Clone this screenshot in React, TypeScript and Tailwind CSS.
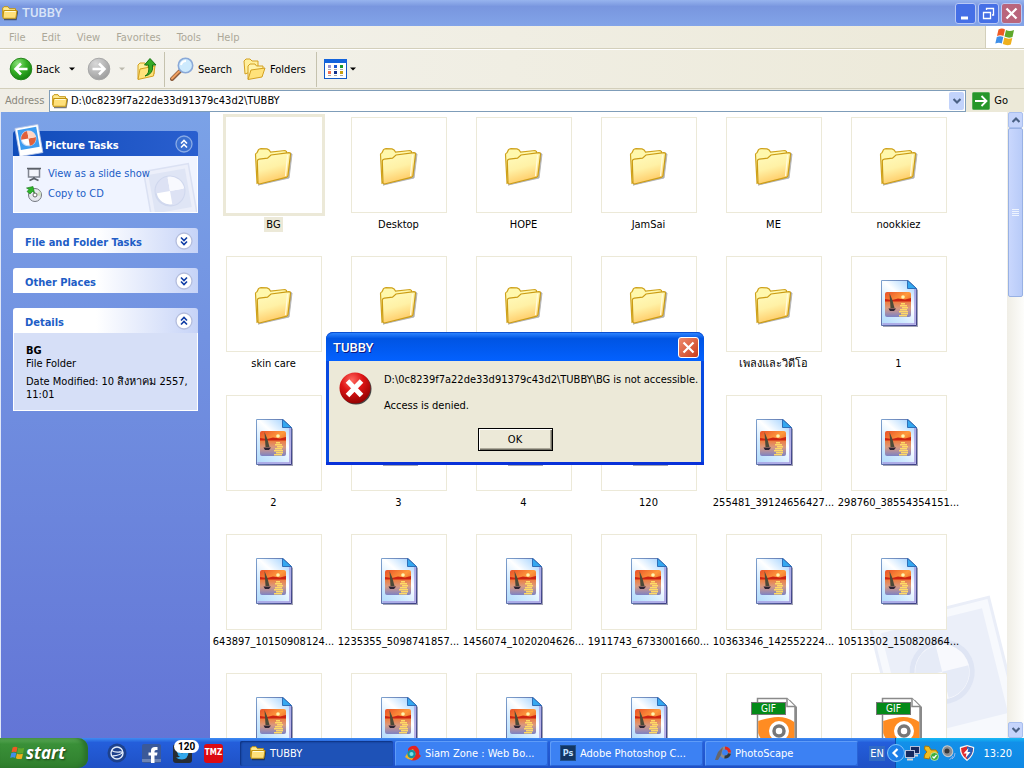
import React from 'react';

const folders = ['BG', 'Desktop', 'HOPE', 'JamSai', 'ME', 'nookkiez', 'skin care', '', '', '', 'เพลงและวิดีโอ'];
const pictures = [
  '1', '2', '3', '4', '120',
  '255481_39124656427...', '298760_38554354151...', '643897_10150908124...', '1235355_5098741857...',
  '1456074_1020204626...', '1911743_6733001660...', '10363346_142552224...', '10513502_150820864...',
  '', '', '', '',
];
const gifs = ['', ''];

const items = [
  ...folders.map((name) => ({ name, kind: 'folder' })),
  ...pictures.map((name) => ({ name, kind: 'picture' })),
  ...gifs.map((name) => ({ name, kind: 'gif' })),
];

function FolderIcon() {
  return (
    <svg className="w-12 h-12" viewBox="0 0 48 48" aria-hidden="true">
      <defs>
        <linearGradient id="folderFront" x1="0" y1="0" x2="0.3" y2="1">
          <stop offset="0" stopColor="#fffcc0" />
          <stop offset="0.55" stopColor="#fff1a6" />
          <stop offset="1" stopColor="#ffcb66" />
        </linearGradient>
      </defs>
      <path d="M8 44 L39 37 L42 13 L40 12 L38 36 Z" fill="#666" stroke="#888" strokeWidth="1" opacity="0.6" />
      <path d="M7 42 L5.500 13.500 Q5.500 12.300 7 11.800 L8.500 8.700 Q9.500 7.700 11 7.600 L17 7.800 Q19.500 8.500 20.500 11 L35 9.500 L36.500 10.500 V14 Z" fill="#fff8ac" stroke="#cfa21c" strokeWidth="1.200" />
      <path d="M8 42.500 L7.300 20 Q7.500 18.300 9.300 18.100 L17.500 17.200 L21 14 L39 11.600 Q40.500 11.600 40.500 13 L38 34.500 Q37.700 36 36.200 36.400 L9.500 43 Z" fill="url(#folderFront)" stroke="#cb9c14" strokeWidth="1.200" />
      <path d="M37.500 14 L35.500 35" stroke="#fffbe0" strokeWidth="1.200" />
    </svg>
  );
}

function PictureIcon() {
  return (
    <svg className="w-12 h-12" viewBox="0 0 48 48" aria-hidden="true">
      <defs>
        <linearGradient id="sheet" x1="0.9" y1="0" x2="0.2" y2="1">
          <stop offset="0" stopColor="#9ccfff" />
          <stop offset="0.4" stopColor="#ffffff" />
          <stop offset="0.7" stopColor="#d4ecff" />
          <stop offset="1" stopColor="#b8defc" />
        </linearGradient>
        <linearGradient id="sheetEdge" x1="0" y1="0" x2="1" y2="1">
          <stop offset="0" stopColor="#7ea2cf" />
          <stop offset="1" stopColor="#3f3f86" />
        </linearGradient>
        <linearGradient id="sky" x1="0" y1="0" x2="1" y2="0.6">
          <stop offset="0" stopColor="#e85028" />
          <stop offset="0.7" stopColor="#ff9a3c" />
          <stop offset="1" stopColor="#f07830" />
        </linearGradient>
        <linearGradient id="sea" x1="0" y1="0" x2="0" y2="1">
          <stop offset="0" stopColor="#f07a38" />
          <stop offset="0.45" stopColor="#d99a80" />
          <stop offset="1" stopColor="#7c82c4" />
        </linearGradient>
      </defs>
      <path d="M8 3 H35 L43 10 V47 H8 Z" fill="#555a78" opacity="0.55" />
      <path d="M6.500 0.500 H33 L41.500 8.500 V45.500 H6.500 Z" fill="url(#sheet)" stroke="url(#sheetEdge)" />
      <path d="M40 9 V44 H7.500" fill="none" stroke="#a59be0" strokeWidth="1.500" />
      <path d="M32.500 0.500 V8.500 H41.500 Z" fill="#34a8f0" stroke="#2f6fb8" />
      <rect x="10" y="12" width="26" height="12" rx="2" fill="url(#sky)" />
      <rect x="10" y="21" width="26" height="16" rx="2" fill="url(#sea)" />
      <path d="M10 19 L17 20 L23 18.500 L30 19.500 L36 18 V21.500 H10 Z" fill="#cc2412" />
      <circle cx="28" cy="17" r="1.800" fill="#fff6b0" />
      <path d="M26 23 h4 v1.500 h-4 z M25 25 h7 v1.500 h-7 z M27 27 h6 v1.500 h-6 z M25 29 h7 v1.500 h-7 z M24 31 h9 v1.500 h-9 z M26 33 h7 v1.500 h-7 z M24 35 h8 v1.500 h-8 z" fill="#ffd966" />
      <path d="M14.500 13 Q18 20 19.500 28 H15.500 Z" fill="#4c4a38" />
      <path d="M13.500 28.500 H21 L19 31 H15 Z" fill="#2d2433" />
    </svg>
  );
}

function GifIcon() {
  return (
    <svg className="w-12 h-12" viewBox="0 0 48 48" aria-hidden="true">
      <path d="M9 3 H40 L47 10 V48 H9 Z" fill="#8a8a8a" />
      <path d="M7.500 1.500 H37 L45 9.500 V50 H7.500 Z" fill="#fff" stroke="#8a8a8a" strokeWidth="1.500" />
      <path d="M37 1.500 V9.500 H45" fill="#fff" stroke="#8a8a8a" strokeWidth="1.500" />
      <path d="M8.200 24 Q14 22 20 21 Q34 18 44.300 25 V48 H16 Q10 42 8.200 36 Z" fill="#ff8c22" />
      <circle cx="29" cy="34" r="10" fill="#fff" />
      <circle cx="29" cy="34" r="5" fill="#fff" stroke="#777" strokeWidth="3.500" />
      <rect x="1.500" y="5.500" width="34" height="12" fill="#048a18" stroke="#777" />
      <text x="18.500" y="15" textAnchor="middle" fontSize="10" fontFamily="DejaVu Sans Condensed, sans-serif" fill="#fff">GIF</text>
    </svg>
  );
}

function SmallFolder() {
  return (
    <svg className="w-4 h-4 shrink-0" viewBox="0 0 16 16" aria-hidden="true">
      <path d="M2 14.500 H14 L15.500 6" fill="none" stroke="#222" strokeWidth="1.500" opacity="0.6" />
      <path d="M0.700 12 V3 L2 1.700 H6 L7.500 3.700 H13.500 V6" fill="#ffe98e" stroke="#c3940f" />
      <path d="M1 13.300 L1.700 5.500 H15 L13.800 13.300 Z" fill="#ffe07a" stroke="#c3940f" />
      <path d="M3 6.500 H13.500" stroke="#fffbd8" />
    </svg>
  );
}

function Flag({ className }: { className: string }) {
  return (
    <svg className={className} viewBox="0 0 20 18" aria-hidden="true">
      <path d="M3.500 1.500 Q7 -0.500 10 1.500 L8.500 8 Q5.500 6.500 2 8 Z" fill="#ee5a24" />
      <path d="M11 2 Q14.500 4 19 2 L17.500 9 Q13.500 10.500 9.500 8.500 Z" fill="#5fa82c" />
      <path d="M1.800 9 Q5 7.500 8.300 9 L6.800 15.500 Q4 14 0.300 15.500 Z" fill="#3f8fe8" />
      <path d="M9.300 9.500 Q13 11.500 17.300 10 L15.800 16.500 Q12 18 7.800 16 Z" fill="#efb01c" />
    </svg>
  );
}

function Chevron({ up, dark }: { up?: boolean; dark?: boolean }) {
  return (
    <svg className="w-[18px] h-[18px]" viewBox="0 0 18 18" aria-hidden="true">
      <circle cx="9" cy="9" r="8" fill={dark ? '#3a6fd0' : '#fff'} stroke={dark ? '#89aae5' : '#b4bddd'} strokeWidth="1.300" />
      <path
        d={up ? 'M6 8.500 L9 5.500 L12 8.500 M6 12.500 L9 9.500 L12 12.500' : 'M6 5.500 L9 8.500 L12 5.500 M6 9.500 L9 12.500 L12 9.500'}
        fill="none"
        stroke={dark ? '#fff' : '#0f3ca5'}
        strokeWidth="1.600"
      />
    </svg>
  );
}

function Arrow({ up }: { up?: boolean }) {
  return (
    <svg className="w-2 h-2" viewBox="0 0 8 8" aria-hidden="true">
      <path d={up ? 'M0.500 6 L4 2.500 L7.500 6' : 'M0.500 2 L4 5.500 L7.500 2'} fill="none" stroke="#4a6185" strokeWidth="2.200" />
    </svg>
  );
}

function Caret({ color }: { color: string }) {
  return (
    <svg className="w-[6px] h-[4px]" viewBox="0 0 6 4" aria-hidden="true">
      <path d="M0 0.500 H6 L3 3.500 Z" fill={color} />
    </svg>
  );
}

function RoundArrow({ forward }: { forward?: boolean }) {
  return (
    <svg className="w-6 h-6" viewBox="0 0 24 24" aria-hidden="true">
      <defs>
        <radialGradient id="roundGreen" cx="0.35" cy="0.25" r="0.8">
          <stop offset="0" stopColor="#8be07a" />
          <stop offset="0.5" stopColor="#36b025" />
          <stop offset="1" stopColor="#128010" />
        </radialGradient>
        <radialGradient id="roundGrey" cx="0.35" cy="0.25" r="0.8">
          <stop offset="0" stopColor="#d8d8d8" />
          <stop offset="1" stopColor="#9c9c9c" />
        </radialGradient>
      </defs>
      <circle cx="12" cy="12" r="10.800" fill={forward ? 'url(#roundGrey)' : 'url(#roundGreen)'} stroke={forward ? '#a8a8a8' : '#27861d'} />
      <path d={forward ? 'M5.500 12 H17 M12 6.500 L17.500 12 L12 17.500' : 'M18.500 12 H7 M12 6.500 L6.500 12 L12 17.500'} fill="none" stroke="#fff" strokeWidth="2.500" />
    </svg>
  );
}

function PolaroidShape({ tint }: { tint?: boolean }) {
  return (
    <>
      <rect x="2" y="2" width="44" height="54" fill={tint ? '#eceffa' : '#fff'} stroke={tint ? '#dbe1f3' : '#b9c9e8'} strokeWidth="1.500" />
      <rect x="6" y="6" width="36" height="38" fill={tint ? '#dfe5f5' : '#3d9cf0'} />
      <circle cx="24" cy="25" r="14" fill="#fff" stroke={tint ? '#d0d8ee' : '#c9d8f2'} strokeWidth="2" />
      <path d="M24 25 V11 A14 14 0 0 0 10 25 Z M24 25 V39 A14 14 0 0 0 38 25 Z" fill={tint ? '#dde2f4' : '#e0603a'} />
      <path d="M24 25 V11 A14 14 0 0 1 38 25 Z" fill={tint ? '#f8f9fe' : '#ffd6c4'} />
    </>
  );
}

function Panel({ title, up, children }: { title: string; up?: boolean; children?: React.ReactNode }) {
  return (
    <section>
      <button className="flex w-full h-[25px] items-center justify-between rounded-t-[3px] bg-linear-to-r from-white from-45% to-[#c6d3f7] pl-3 pr-[5px] font-bold text-[#215dc6]">
        <span className="pt-1">{title}</span>
        <Chevron up={up} />
      </button>
      {children}
    </section>
  );
}

function WindowControl({ label, close, children }: { label: string; close?: boolean; children: React.ReactNode }) {
  return (
    <button aria-label={label} className={`flex w-[21px] h-[21px] items-center justify-center rounded-[3px] border border-[#b8c8f5] ${close ? 'bg-[#b9657c]' : 'bg-[#456fe6]'}`}>
      <svg className="w-[17px] h-[17px]" viewBox="0 0 17 17" fill="none" stroke="#fff" aria-hidden="true">{children}</svg>
    </button>
  );
}

function ToolBar() {
  return (
    <div className="flex h-[39px] items-center border-t border-white bg-linear-to-r from-[#f4f3ee] to-[#ece9d8] pl-[9px]">
      <button className="flex items-center gap-[3px]"><RoundArrow /><span className="pt-px">Back</span></button>
      <button aria-label="Back history" className="ml-[7px] p-[2px]"><Caret color="#000" /></button>
      <button aria-label="Forward" className="ml-[10px]"><RoundArrow forward /></button>
      <button aria-label="Forward history" className="ml-[6px] p-[2px]"><Caret color="#bbb9ae" /></button>
      <button aria-label="Up" className="ml-2">
        <svg className="w-6 h-6" viewBox="0 0 24 24" aria-hidden="true">
          <path d="M3 22 V8 L5 6 H10 L12 9 H19 V17 Z" fill="#ffef9c" stroke="#d3a020" />
          <path d="M3 22.500 L5 12 L20 9 L18.500 19 Z" fill="#ffe27a" stroke="#d3a020" />
          <path d="M10 19 Q15 17 13.500 8 H9.500 L15 1.500 L21 8 H17.500 Q19 17 10 19 Z" fill="#35ab28" stroke="#1b7514" />
        </svg>
      </button>
      <div className="mx-[5px] h-[35px] w-px bg-[#c5c2ae]" />
      <button className="flex items-center gap-1">
        <svg className="w-6 h-6" viewBox="0 0 24 24" aria-hidden="true">
          <path d="M2 22 L10 14" stroke="#8a5a3c" strokeWidth="4" strokeLinecap="round" />
          <path d="M2 21.500 L9 14.500" stroke="#f0a060" strokeWidth="2" strokeLinecap="round" />
          <circle cx="15.500" cy="8.500" r="7.200" fill="#cdeafd" stroke="#8aa9d8" strokeWidth="1.600" />
          <path d="M11 8 Q12 4 16 4" stroke="#fff" strokeWidth="2" fill="none" />
        </svg>
        <span className="pt-px">Search</span>
      </button>
      <button className="ml-[10px] flex items-center gap-1">
        <svg className="w-6 h-6" viewBox="0 0 24 24" aria-hidden="true">
          <path d="M3 17 L2 4 L4 2 H8 L10 4 H16 V12 Z" fill="#ffef9c" stroke="#d3a020" />
          <path d="M6 22 V9 L8 7 H13 L14.500 9 H21 V14" fill="#fff3ac" stroke="#d3a020" />
          <path d="M6 22.500 L9 13 L23 11 L20 20 Z" fill="#ffe27a" stroke="#d3a020" />
        </svg>
        <span className="pt-px">Folders</span>
      </button>
      <div className="ml-[10px] mr-[7px] h-[35px] w-px bg-[#c5c2ae]" />
      <button aria-label="Views" className="flex items-center gap-[3px]">
        <svg className="w-[23px] h-[20px]" viewBox="0 0 23 20" aria-hidden="true">
          <rect x="0.500" y="0.500" width="22" height="19" fill="#fff" stroke="#1058c8" />
          <rect width="23" height="4" fill="#1464dc" />
          <g>
            <rect x="4" y="6" width="3" height="3" fill="#9c94d0" />
            <rect x="10" y="6" width="3" height="3" fill="#1c58d0" />
            <rect x="16" y="6" width="3" height="3" fill="#189828" />
            <rect x="4" y="12" width="3" height="3" fill="#f07050" />
            <rect x="10" y="12" width="3" height="3" fill="#12308c" />
            <rect x="16" y="12" width="3" height="3" fill="#c8a010" />
            <path d="M4 10.500 h3 m3 0 h3 m3 0 h3 M4 16.500 h3 m3 0 h3 m3 0 h3" stroke="#a8a8a8" />
          </g>
        </svg>
        <Caret color="#000" />
      </button>
    </div>
  );
}

function SideBar() {
  return (
    <aside className="flex w-[210px] shrink-0 flex-col gap-[15px] border-l border-[#dfe6f7] bg-linear-to-b from-[#7ba2e7] to-[#6375d6] pl-3 pr-3 pt-[19px]">
      <section>
        <button className="relative flex w-full h-[25px] items-center justify-between rounded-t-[3px] bg-linear-to-r from-[#0f4cba] to-[#2a5fcf] pl-8 pr-[5px] font-bold text-white">
          <svg className="absolute -left-[2px] -top-2 w-[36px] h-[36px]" viewBox="0 0 68 68" aria-hidden="true">
            <g transform="rotate(-10 34 34) translate(10 4)"><PolaroidShape /></g>
          </svg>
          <span className="pt-1">Picture Tasks</span>
          <Chevron up dark />
        </button>
        <div className="relative flex h-[57px] flex-col items-start gap-1 overflow-hidden border border-t-0 border-white bg-[#f0f4ff] pl-3 pt-[10px] text-[#215dc6]">
          <svg className="absolute -right-1 top-[4px] w-[62px] h-[62px]" viewBox="0 0 60 60" aria-hidden="true">
            <g transform="rotate(-10 30 30) translate(6 5)"><PolaroidShape tint /></g>
          </svg>
          <a href="#slideshow" className="relative flex items-center gap-[6px]">
            <svg className="w-4 h-4" viewBox="0 0 16 16" aria-hidden="true">
              <path d="M2.500 3 H13.500 V11 H2.500 Z" fill="#f3f5fb" stroke="#808590" strokeWidth="1.500" />
              <path d="M1 2.500 H15 M8 11 V13 M3.500 14.500 L8 12.500 L12.500 14.500" stroke="#5b6068" strokeWidth="1.700" fill="none" />
            </svg>
            View as a slide show
          </a>
          <a href="#copy" className="relative flex items-center gap-[6px]">
            <svg className="w-4 h-4" viewBox="0 0 16 16" aria-hidden="true">
              <circle cx="9" cy="9" r="6.500" fill="#e6e8ee" stroke="#73777f" />
              <path d="M9 9 L14 5 A6 6 0 0 1 15 10 Z" fill="#cfe0c0" />
              <circle cx="9" cy="9" r="2" fill="#fff" stroke="#666" />
              <path d="M0.500 2 L7 0.500 L8.500 7 L6.500 5.500 L4 8 L1 5.500 L3 3.500 Z" fill="#2db52a" stroke="#187516" strokeWidth="0.600" />
            </svg>
            Copy to CD
          </a>
        </div>
      </section>
      <Panel title="File and Folder Tasks" />
      <Panel title="Other Places" />
      <Panel title="Details" up>
        <div className="h-[78px] border border-t-0 border-white bg-[#d6dff7] pl-3 pt-[11px] leading-[13px]">
          <p className="font-bold">BG</p>
          <p>File Folder</p>
          <p className="mt-[5px]">Date Modified: 10 สิงหาคม 2557, 11:01</p>
        </div>
      </Panel>
    </aside>
  );
}

function FileGrid() {
  return (
    <main className="relative min-w-0 flex-1 overflow-hidden bg-white">
      <svg className="absolute -right-2 bottom-0 w-[150px] h-[150px]" viewBox="0 0 150 150" aria-hidden="true">
        <g transform="rotate(-14 75 75) translate(15 22)">
          <rect x="1" y="1" width="122" height="150" fill="#f7f9fd" stroke="#eaeef8" strokeWidth="3" />
          <rect x="10" y="10" width="104" height="108" fill="#ebeff9" />
          <circle cx="60" cy="62" r="30" fill="#f8f9fd" stroke="#dfe5f4" strokeWidth="5" />
          <path d="M60 62 V35 A27 27 0 0 0 33 62 Z M60 62 V89 A27 27 0 0 0 87 62 Z" fill="#e6ebf7" />
        </g>
      </svg>
      <ul className="relative grid grid-cols-[repeat(auto-fill,125px)] pl-px pt-[5px]">
        {items.map((item, i) => (
          <li key={i} className="h-[139px]">
            <button className="flex w-full flex-col items-center">
              <span className={`flex h-24 w-24 items-center justify-center border bg-white ${i === 0 ? 'border-white ring-3 ring-[#ece9d8]' : 'border-[#ece9d8]'}`}>
                {item.kind === 'folder' && <FolderIcon />}
                {item.kind === 'picture' && <PictureIcon />}
                {item.kind === 'gif' && <GifIcon />}
              </span>
              {item.name && (
                <span className={`mt-1 px-[2px] pt-px leading-[14px] whitespace-nowrap ${i === 0 ? 'bg-[#ece9d8]' : ''}`}>{item.name}</span>
              )}
            </button>
          </li>
        ))}
      </ul>
    </main>
  );
}

function ScrollBar() {
  const button = 'flex h-4 w-[15px] shrink-0 items-center justify-center rounded-[2px] border border-[#a9bfee] bg-[#c5d4fb]';
  return (
    <div className="flex w-[17px] shrink-0 flex-col items-center bg-linear-to-r from-[#f0eee6] to-[#fdfdfb]">
      <button aria-label="Scroll up" className={button}><Arrow up /></button>
      <div className="flex h-[169px] w-[15px] flex-col items-center justify-center gap-px rounded-[2px] border border-[#98b1e4] bg-linear-to-r from-[#c9d7fd] to-[#b8cbf8]">
        {[0, 1, 2, 3].map((n) => (
          <span key={n} className="h-px w-[7px] bg-[#eef4fe]" />
        ))}
      </div>
      <div className="flex-1" />
      <button aria-label="Scroll down" className={button}><Arrow /></button>
    </div>
  );
}

function ErrorDialog() {
  return (
    <div role="alertdialog" aria-labelledby="dialog-title" className="absolute left-[326px] top-[332px] w-[378px] rounded-t-[7px] border-b-3 border-[#0831d9] bg-[#0849e0] px-[3px]">
      <div className="-mx-[3px] flex h-[29px] items-center justify-between rounded-t-[7px] border-t border-[#0a4fd0] bg-linear-to-b from-[#2b83ff] via-[#0054e3] via-20% to-[#0361ff] pl-[7px] pr-[5px]">
        <h2 id="dialog-title" className="pt-[2px] font-['Roboto',sans-serif] text-[13px] font-medium text-white [text-shadow:1px_1px_#0a1883]">TUBBY</h2>
        <button aria-label="Close" className="flex h-[21px] w-[21px] items-center justify-center rounded-[3px] border border-white bg-linear-to-br from-[#ee8a6c] to-[#c93a16]">
          <svg className="w-[13px] h-[13px]" viewBox="0 0 13 13" aria-hidden="true">
            <path d="M1.500 1.500 L11.500 11.500 M11.500 1.500 L1.500 11.500" stroke="#fff" strokeWidth="2.200" />
          </svg>
        </button>
      </div>
      <div className="bg-[#ece9d8] pb-[11px] pt-[11px]">
        <div className="flex gap-3 pl-[10px]">
          <svg className="w-[33px] h-[33px] shrink-0" viewBox="0 0 33 33" aria-hidden="true">
            <defs>
              <radialGradient id="errorRed" cx="0.4" cy="0.25" r="0.8">
                <stop offset="0" stopColor="#ff6a60" />
                <stop offset="0.45" stopColor="#dd1414" />
                <stop offset="1" stopColor="#8c0000" />
              </radialGradient>
            </defs>
            <circle cx="17" cy="17" r="15.500" fill="#444" />
            <circle cx="16" cy="16" r="15.500" fill="url(#errorRed)" />
            <path d="M8.500 9 L22.500 23.500 M22.500 9 L8.500 23.500" stroke="#fff" strokeWidth="5" />
          </svg>
          <div className="pt-px leading-[13px] whitespace-nowrap">
            <p>D:\0c8239f7a22de33d91379c43d2\TUBBY\BG is not accessible.</p>
            <p className="mt-[13px]">Access is denied.</p>
          </div>
        </div>
        <div className="mt-4 flex justify-center">
          <button className="h-[23px] w-[75px] border border-black bg-[#ece9d8] shadow-[inset_1px_1px_#fff,inset_-1px_-1px_#716f64,inset_-2px_-2px_#aca899]">OK</button>
        </div>
      </div>
    </div>
  );
}

function Task({ label, active, children }: { label: string; active?: boolean; children: React.ReactNode }) {
  return (
    <button className={`flex h-[25px] max-w-[153px] flex-1 items-center gap-1 rounded-[2px] pl-[10px] whitespace-nowrap ${active ? 'bg-[#1e52b7] shadow-[inset_1px_1px_2px_#0b2f7c]' : 'bg-[#3c81f3] shadow-[inset_1px_1px_#5f9cf8,inset_-1px_-1px_#2a64d6]'}`}>
      {children}
      <span className="pt-[2px]">{label}</span>
    </button>
  );
}

function TaskBar() {
  return (
    <footer className="flex h-[30px] shrink-0 items-center bg-linear-to-b from-[#3f8cf3] from-0% via-[#245edb] via-15% to-[#1f51c5] text-white">
      <button className="flex h-full w-[88px] items-center gap-px rounded-r-[10px] bg-linear-to-b from-[#5fae5c] from-0% via-[#3a9038] via-20% to-[#2f7f2d] pl-[10px] font-['Open_Sans',sans-serif] text-[17px] font-bold italic [text-shadow:1px_1px_2px_#1a4017] shadow-[inset_-4px_0_4px_#2a702a]">
        <Flag className="w-[15px] h-[16px]" />
        start
      </button>
      <nav aria-label="Quick launch" className="ml-[19px] flex items-center">
        <a href="#browser" aria-label="Browser" className="mr-[15px]">
          <svg className="w-5 h-5" viewBox="0 0 20 20" aria-hidden="true">
            <circle cx="10" cy="10" r="9.500" fill="#1d418c" />
            <circle cx="10" cy="10" r="6" fill="none" stroke="#e4edfb" strokeWidth="1.400" />
            <path d="M4.500 7.500 Q8 9.500 12 9 Q15 8.500 15.500 9.500 Q14 12 5.500 13" fill="none" stroke="#e4edfb" strokeWidth="1.300" />
          </svg>
        </a>
        <a href="#facebook" aria-label="Facebook" className="mr-3">
          <svg className="w-[19px] h-[19px]" viewBox="0 0 19 19" aria-hidden="true">
            <rect width="19" height="19" rx="2" fill="#3b5998" />
            <rect y="15" width="19" height="3" fill="#6d84b4" />
            <path d="M9 19 V11.500 H6.500 V8.500 H9 V6.500 Q9 3 13 3 H15.500 V6 H14 Q12.500 6 12.500 7.500 V8.500 H15.500 L15 11.500 H12.500 V19 Z" fill="#fff" />
          </svg>
        </a>
        <a href="#twitter" aria-label="Twitter" className="relative mr-3">
          <svg className="w-[19px] h-[19px]" viewBox="0 0 19 19" aria-hidden="true">
            <rect width="19" height="19" rx="3" fill="#272c33" />
            <path d="M3 13.500 Q6 13.500 7 12.500 Q5 12 4.500 10.500 L5.500 10.300 Q3.500 9 4 7 Q7 9 9.500 9.500 Q9.500 6 12.500 6 L14.500 7 L16.500 6.500 L15.500 8.500 Q15 15 9 15.500 Q5 15.500 3 13.500 Z" fill="#32a8ee" />
          </svg>
          <span className="absolute left-[1px] -top-[4px] rounded-full bg-white px-1 font-['Roboto',sans-serif] text-[10px] leading-[13px] font-bold text-black">120</span>
        </a>
        <a href="#tmz" className="flex h-[19px] w-[19px] items-center justify-center rounded-[3px] bg-[#dc0a12] text-[8px] font-bold">TMZ</a>
      </nav>
      <div className="ml-[17px] flex min-w-0 flex-1 gap-[2px]">
        <Task label="TUBBY" active><SmallFolder /></Task>
        <Task label="Siam Zone : Web Bo...">
          <svg className="w-4 h-4 shrink-0" viewBox="0 0 16 16" aria-hidden="true">
            <path d="M3 4 Q6 0 11 1 L13 3 Q15 6 14 9 L16 11 L13 14 Q8 17 4 14 Z" fill="#e52420" />
            <path d="M0 12 Q3 6 8 4 L11 9 L7 15 Q3 15 0 12 Z" fill="#f0b526" />
            <circle cx="6.500" cy="9" r="4.200" fill="#168fa0" />
            <circle cx="6.500" cy="9" r="2" fill="#7ce0e8" />
          </svg>
        </Task>
        <Task label="Adobe Photoshop C...">
          <span className="flex h-4 w-4 shrink-0 items-center justify-center border border-[#20508c] bg-[#123663] text-[9px] font-bold text-[#c2e2ff]">Ps</span>
        </Task>
        <Task label="PhotoScape">
          <svg className="w-4 h-4 shrink-0" viewBox="0 0 16 16" aria-hidden="true">
            <circle cx="10" cy="7.500" r="4.500" fill="none" stroke="#8c8c90" strokeWidth="3" />
            <path d="M10 3 A4.500 4.500 0 0 1 14.500 7.500" fill="none" stroke="#e5261c" strokeWidth="3" />
            <path d="M14.500 8.500 A4.500 4.500 0 0 1 9.500 12" fill="none" stroke="#2b3640" strokeWidth="3" />
            <path d="M8 2 L3 7 L1 12 L0 15 H3 L6 10 Z" fill="#66666c" />
          </svg>
        </Task>
      </div>
      <button className="mr-[10px] bg-[#316ac5] px-px pt-px leading-[14px]">EN</button>
      <div className="flex h-full w-[129px] items-center border-l border-[#0b4fae] bg-linear-to-b from-[#19b9f5] from-0% via-[#1290e9] via-15% to-[#0f88e4] pr-3">
        <button aria-label="Show hidden icons" className="-ml-[9px]">
          <svg className="w-[18px] h-[18px]" viewBox="0 0 18 18" aria-hidden="true">
            <circle cx="9" cy="9" r="8.500" fill="#1c7fe8" stroke="#7fc4fa" />
            <path d="M10.500 5 L6.500 9 L10.500 13" fill="none" stroke="#fff" strokeWidth="2.200" />
          </svg>
        </button>
        <div className="flex items-center gap-[2px]">
          <svg className="w-4 h-4" viewBox="0 0 16 16" aria-hidden="true">
            <rect x="5.500" y="1.500" width="9" height="7" fill="#15295f" stroke="#b4c0dc" />
            <path d="M8 10.500 H13" stroke="#d6d6d6" strokeWidth="2" />
            <rect x="0.500" y="5.500" width="9" height="7" fill="#15295f" stroke="#b4c0dc" />
            <path d="M2 14.500 H8" stroke="#d6d6d6" strokeWidth="2" />
          </svg>
          <svg className="w-4 h-4" viewBox="0 0 16 16" aria-hidden="true">
            <path d="M2 1 L6 1.500 L8 5 L13 5 L15 8 L12 11 L8 10 L6 14 L1 13 L2 9 L4 7 L1.500 4 Z" fill="#f0bd22" stroke="#a97708" />
            <circle cx="11.500" cy="11.500" r="4" fill="#3dae3a" stroke="#d8f2c8" strokeWidth="0.700" />
            <path d="M9.500 11.500 L11 13 L13.500 10" fill="none" stroke="#fff" strokeWidth="1.300" />
          </svg>
          <svg className="w-4 h-4" viewBox="0 0 16 16" aria-hidden="true">
            <ellipse cx="6.500" cy="6.500" rx="5" ry="5.500" fill="#8c9094" stroke="#c8ccd0" transform="rotate(-25 6 6)" />
            <circle cx="6" cy="6" r="2.500" fill="#35383c" />
            <path d="M11 14 Q14 12 14 8 M8.500 14.500 Q11 13.500 12 11" fill="none" stroke="#95b9ef" />
          </svg>
          <svg className="w-4 h-4" viewBox="0 0 16 16" aria-hidden="true">
            <path d="M8 0.700 L14.500 2.500 Q15 10 8 15.300 Q1 10 1.500 2.500 Z" fill="#e12a2c" stroke="#f5f5f5" strokeWidth="1.300" />
            <path d="M8 1.500 L14 3 Q14 10 8 14.500 Z" fill="#2c5fb8" />
            <path d="M9.500 3 L4.500 8.500 H7.500 L6.500 13 L11.500 7 H8.500 Z" fill="#fff" />
          </svg>
        </div>
        <time className="ml-auto pt-px">13:20</time>
      </div>
    </footer>
  );
}

export default function App() {
  return (
    <div className="relative flex h-screen flex-col overflow-hidden font-['DejaVu_Sans_Condensed','Noto_Sans',sans-serif] text-[11px] leading-4 text-black">
      <header className="flex h-[26px] shrink-0 items-center gap-1 bg-linear-to-b from-[#97b4ee] from-0% via-[#7996df] via-25% to-[#82a4e8] pl-[2px] pr-[2px]">
        <SmallFolder />
        <h1 className="flex-1 font-['Roboto',sans-serif] text-[13px] font-medium text-[#d8e4f8]">TUBBY</h1>
        <div className="flex gap-[2px]">
          <WindowControl label="Minimize"><path d="M4 13 H11" strokeWidth="3" /></WindowControl>
          <WindowControl label="Restore"><path d="M6.500 5 V3.500 H13.500 V10 H12 M3.500 7.500 H10.500 V13.500 H3.500 Z M3 7.500 H11 M6 3.500 H14" strokeWidth="1.300" /></WindowControl>
          <WindowControl label="Close" close><path d="M3.500 3.500 L13.500 13.500 M13.500 3.500 L3.500 13.500" strokeWidth="2.300" /></WindowControl>
        </div>
      </header>

      <div className="flex h-[23px] shrink-0 border-b border-[#d3cfbb] bg-linear-to-r from-[#f4f3ee] to-[#ece9d8]">
        <nav aria-label="Menu" className="flex flex-1 items-center gap-4 pl-[9px] pt-px text-[#aca899]">
          {['File', 'Edit', 'View', 'Favorites', 'Tools', 'Help'].map((name) => (
            <button key={name}>{name}</button>
          ))}
        </nav>
        <div className="flex w-[39px] items-center justify-center border-l border-[#d3cfbb] bg-white">
          <Flag className="w-[20px] h-[18px]" />
        </div>
      </div>

      <ToolBar />

      <div className="flex h-[24px] shrink-0 items-center border-t border-[#d3cfbb] bg-linear-to-r from-[#f0eee6] to-[#ece9d8]">
        <label htmlFor="address" className="w-[49px] pl-[5px] pt-px text-[#8a887c]">Address</label>
        <div className="flex h-[22px] flex-1 items-center gap-[3px] border border-[#7f9db9] bg-white pl-[2px] pr-px">
          <SmallFolder />
          <input id="address" type="text" defaultValue="D:\0c8239f7a22de33d91379c43d2\TUBBY" className="min-w-0 flex-1 pt-px outline-none" />
          <button aria-label="Address list" className="flex h-[18px] w-[15px] items-center justify-center rounded-[2px] bg-[#c2d3fb]"><Arrow /></button>
        </div>
        <button className="ml-[6px] mr-4 flex items-center gap-1">
          <svg className="w-[18px] h-[18px]" viewBox="0 0 18 18" aria-hidden="true">
            <rect x="0.500" y="0.500" width="17" height="17" rx="1" fill="#26962a" stroke="#56ac58" />
            <path d="M3 9 H14 M9.500 4 L14.500 9 L9.500 14" fill="none" stroke="#fff" strokeWidth="1.800" />
          </svg>
          <span className="pt-px">Go</span>
        </button>
      </div>

      <div className="flex min-h-0 flex-1">
        <SideBar />
        <FileGrid />
        <ScrollBar />
      </div>

      <TaskBar />
      <ErrorDialog />
    </div>
  );
}
